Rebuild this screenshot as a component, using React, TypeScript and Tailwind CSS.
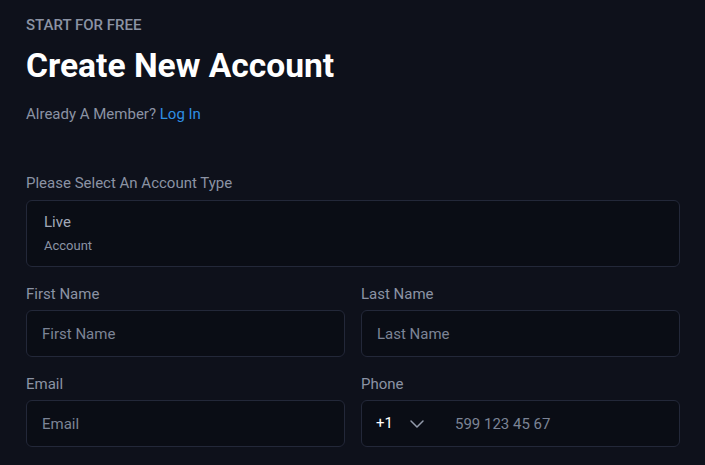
import { ChevronDown } from "lucide-react";

const inputClass =
  "h-[47px] w-full rounded-md border border-[#232839] bg-[#0a0d15] px-[15px] text-[15px] text-white placeholder:text-[#7c8496] outline-none";

function Field({ label, placeholder }: { label: string; placeholder: string }) {
  return (
    <div className="flex flex-col">
      <label className="mb-[6px] text-[15px] leading-[20px] text-[#8b93a4]">{label}</label>
      <input className={inputClass} placeholder={placeholder} />
    </div>
  );
}

export default function App() {
  return (
    <div
      className="min-h-[465px] w-full bg-[#0e111b] pl-[26px] pr-[25px] pt-[15px]"
      style={{ fontFamily: "Roboto, 'Liberation Sans', sans-serif" }}
    >
      <p className="text-[15px] font-medium uppercase leading-[20px] text-[#8b93a4]">
        Start for free
      </p>
      <h1 className="mt-[11px] text-[33.6px] font-bold leading-[40px] text-white">
        Create New Account
      </h1>
      <p className="mt-[18px] text-[15px] leading-[20px] text-[#8b93a4]">
        Already A Member? <a className="text-[#2e8fe3]">Log In</a>
      </p>

      <div className="mt-[49px]">
        <label className="block text-[15px] leading-[20px] text-[#8b93a4]">
          Please Select An Account Type
        </label>
        <div className="mt-[7px] h-[67px] rounded-md border border-[#232839] bg-[#0a0d15] px-[17px] pt-[11px]">
          <p className="text-[15px] leading-[20px] text-[#a2a9b8]">Live</p>
          <p className="mt-[5px] text-[13px] leading-[18px] text-[#8b93a4]">Account</p>
        </div>
      </div>

      <div className="mt-[17px] grid grid-cols-2 gap-x-[16px] gap-y-[17px]">
        <Field label="First Name" placeholder="First Name" />
        <Field label="Last Name" placeholder="Last Name" />
        <Field label="Email" placeholder="Email" />
        <div className="flex flex-col">
          <label className="mb-[6px] text-[15px] leading-[20px] text-[#8b93a4]">Phone</label>
          <div className="flex h-[47px] items-center rounded-md border border-[#232839] bg-[#0a0d15] pl-[14px]">
            <span className="text-[15px] text-white">+1</span>
            <ChevronDown className="ml-[12px] h-[24px] w-[24px] text-[#939bab]" strokeWidth={1.5} />
            <input
              className="ml-[26px] h-full flex-1 bg-transparent text-[15px] text-white placeholder:text-[#7c8496] outline-none"
              placeholder="599 123 45 67"
            />
          </div>
        </div>
      </div>
    </div>
  );
}
